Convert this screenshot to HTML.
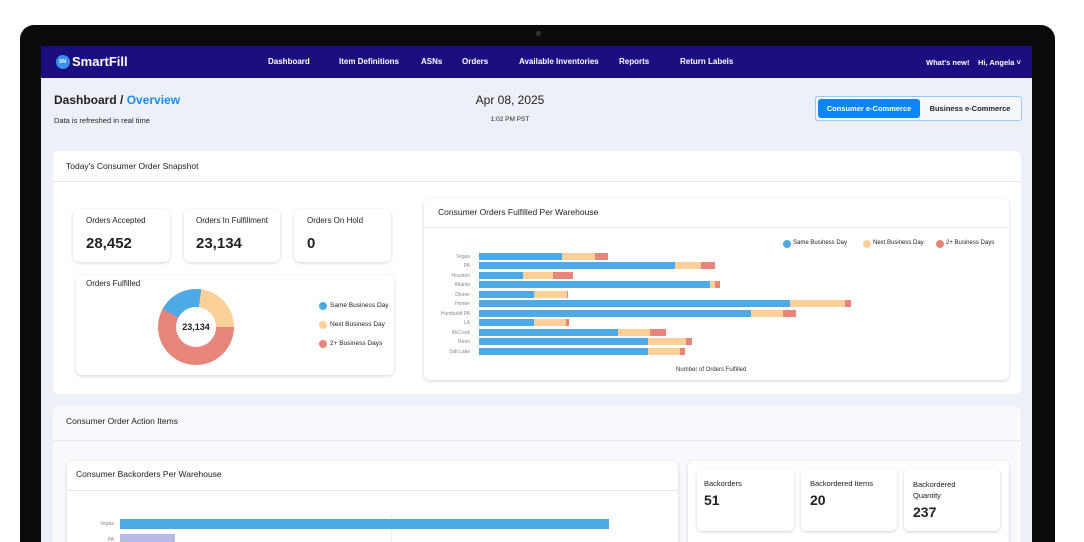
<!DOCTYPE html>
<html><head><meta charset="utf-8"><style>
*{margin:0;padding:0;box-sizing:border-box}
html,body{width:1084px;height:542px;overflow:hidden}
body{background:#fff;font-family:"Liberation Sans",sans-serif;position:relative;color:#222}
.a{position:absolute}
.frame{left:20px;top:25px;width:1035px;height:517px;background:#0b0b0d;border-radius:14px 14px 0 0}
.screen{left:41px;top:46px;width:991px;height:496px;background:#edf0f7;overflow:hidden}
.nav{left:0;top:0;width:991px;height:32px;background:#1b0e80}
.nav span{position:absolute;top:11px;color:#fff;font-size:8px;font-weight:bold;white-space:nowrap}
.card{background:#fff;border-radius:6px}
.sh{box-shadow:0 1px 3px rgba(0,0,0,.18)}
.t{font-size:8.5px;white-space:nowrap}
.lbl{font-size:5px;color:#888;text-align:right;width:40px;white-space:nowrap}
.bar{height:7px}
.b{background:#4ea9e7}.o{background:#fdd09a}.r{background:#e8857a}
.dot{width:8px;height:8px;border-radius:50%}
</style></head><body>
<div class="a frame"></div>
<div class="a" style="left:536px;top:31px;width:5px;height:5px;border-radius:50%;background:#333"></div>
<div class="a screen">
 <div class="a nav">
  <div class="a" style="left:15px;top:9px;width:14px;height:14px;border-radius:50%;background:#3b8ef0"></div>
  <span style="left:18px;top:13px;font-size:5px">SN</span>
  <span style="left:31px;top:8px;font-size:13px">SmartFill</span>
  <span style="left:227px">Dashboard</span>
  <span style="left:298px">Item Definitions</span>
  <span style="left:380px">ASNs</span>
  <span style="left:421px">Orders</span>
  <span style="left:478px">Available Inventories</span>
  <span style="left:578px">Reports</span>
  <span style="left:639px">Return Labels</span>
  <span style="left:885px;top:12px;font-size:7.5px">What's new!</span>
  <span style="left:937px;top:12px;font-size:7.5px">Hi, Angela ˅</span>
 </div>
 <div class="a" style="left:13px;top:47px;font-size:12px;font-weight:bold">Dashboard / <span style="color:#1a8cf0">Overview</span></div>
 <div class="a t" style="left:13px;top:70px;font-size:7.5px">Data is refreshed in real time</div>
 <div class="a" style="left:430px;top:47px;width:78px;text-align:center;font-size:12px">Apr 08, 2025</div>
 <div class="a" style="left:430px;top:70px;width:78px;text-align:center;font-size:6.5px">1:02 PM PST</div>
 <div class="a" style="left:774px;top:50px;width:207px;height:25px;border:1px solid #9cc8f5;border-radius:3px;background:#f4f7fc"></div>
 <div class="a" style="left:777px;top:53px;width:102px;height:19px;background:#0a84ff;border-radius:3px;color:#fff;font-size:7.5px;font-weight:bold;text-align:center;line-height:19px">Consumer e-Commerce</div>
 <div class="a" style="left:879px;top:53px;width:100px;height:19px;font-size:7.5px;font-weight:bold;text-align:center;line-height:19px">Business e-Commerce</div>

 <div class="a card" style="left:12px;top:105px;width:968px;height:243px"></div>
 <div class="a t" style="left:25px;top:115px">Today's Consumer Order Snapshot</div>
 <div class="a" style="left:12px;top:135px;width:968px;height:1px;background:#e6e8ee"></div>

 <div class="a card sh" style="left:32px;top:163px;width:97px;height:53px"></div>
 <div class="a card sh" style="left:143px;top:163px;width:96px;height:53px"></div>
 <div class="a card sh" style="left:253px;top:163px;width:97px;height:53px"></div>
 <div class="a t" style="left:45px;top:170px;font-size:8px">Orders Accepted</div>
 <div class="a t" style="left:155px;top:170px;font-size:8px">Orders In Fulfillment</div>
 <div class="a t" style="left:266px;top:170px;font-size:8px">Orders On Hold</div>
 <div class="a" style="left:45px;top:189px;font-size:15px;font-weight:bold">28,452</div>
 <div class="a" style="left:155px;top:189px;font-size:15px;font-weight:bold">23,134</div>
 <div class="a" style="left:266px;top:189px;font-size:15px;font-weight:bold">0</div>

 <div class="a card sh" style="left:35px;top:229px;width:318px;height:100px"></div>
 <div class="a t" style="left:45px;top:233px;font-size:8px">Orders Fulfilled</div>
 <div class="a" style="left:117px;top:243px;width:76px;height:76px;border-radius:50%;background:conic-gradient(from -62deg,#4ea9e7 0 70deg,#fdd09a 70deg 152deg,#e8857a 152deg 360deg)"></div>
 <div class="a" style="left:135px;top:261px;width:40px;height:40px;border-radius:50%;background:#fff;text-align:center;line-height:40px;font-size:9px;font-weight:bold">23,134</div>
 <div class="a dot b" style="left:278px;top:256px"></div><div class="a t" style="left:289px;top:256px;font-size:6.5px">Same Business Day</div>
 <div class="a dot o" style="left:278px;top:275px"></div><div class="a t" style="left:289px;top:275px;font-size:6.5px">Next Business Day</div>
 <div class="a dot r" style="left:278px;top:294px"></div><div class="a t" style="left:289px;top:294px;font-size:6.5px">2+ Business Days</div>

 <div class="a card sh" style="left:383px;top:152px;width:585px;height:182px"></div>
 <div class="a t" style="left:397px;top:161px">Consumer Orders Fulfilled Per Warehouse</div>
 <div class="a" style="left:383px;top:181px;width:585px;height:1px;background:#eceef2"></div>
 <div class="a dot b" style="left:742px;top:194px"></div><div class="a t" style="left:752px;top:194px;font-size:6px">Same Business Day</div>
 <div class="a dot o" style="left:822px;top:194px"></div><div class="a t" style="left:832px;top:194px;font-size:6px">Next Business Day</div>
 <div class="a dot r" style="left:895px;top:194px"></div><div class="a t" style="left:905px;top:194px;font-size:6px">2+ Business Days</div>
 <div class="a t" style="left:635px;top:321px;font-size:6px;color:#333">Number of Orders Fulfilled</div>
 <div id="bars"></div>

 <div class="a card" style="left:12px;top:360px;width:968px;height:200px;background:#f8f9fc"></div>
 <div class="a t" style="left:25px;top:370px">Consumer Order Action Items</div>
 <div class="a" style="left:12px;top:394px;width:968px;height:1px;background:#e2e5ec"></div>
 <div class="a card sh" style="left:26px;top:415px;width:611px;height:100px"></div>
 <div class="a t" style="left:35px;top:423px">Consumer Backorders Per Warehouse</div>
 <div class="a" style="left:26px;top:444px;width:611px;height:1px;background:#e6e8ee"></div>
 <div class="a" style="left:350px;top:468px;width:1px;height:40px;background:#eceef4"></div>
 <div class="a lbl" style="left:33px;top:475px">Vegas</div>
 <div class="a b" style="left:79px;top:473px;width:489px;height:10px"></div>
 <div class="a lbl" style="left:33px;top:491px">PA</div>
 <div class="a" style="left:79px;top:488px;width:55px;height:10px;background:#b9b9e6"></div>
 <div class="a card sh" style="left:647px;top:415px;width:321px;height:100px"></div>
 <div class="a card sh" style="left:656px;top:422px;width:97px;height:63px"></div>
 <div class="a card sh" style="left:760px;top:422px;width:96px;height:63px"></div>
 <div class="a card sh" style="left:863px;top:422px;width:96px;height:63px"></div>
 <div class="a t" style="left:663px;top:433px;font-size:7.5px">Backorders</div>
 <div class="a t" style="left:769px;top:433px;font-size:7.5px">Backordered Items</div>
 <div class="a" style="left:872px;top:433px;font-size:7.5px;line-height:11px">Backordered<br>Quantity</div>
 <div class="a" style="left:663px;top:446px;font-size:14px;font-weight:bold">51</div>
 <div class="a" style="left:769px;top:446px;font-size:14px;font-weight:bold">20</div>
 <div class="a" style="left:872px;top:458px;font-size:14px;font-weight:bold">237</div>
</div>
<script>
var d=[["Vegas",562,595,608],["PA",675,701,715],["Houston",523,553,573],["Atlanta",710,715,720],["Dinner",534,567,568],["Homer",790,845,851],["Humboldt PA",751,783,796],["LA",534,566,569],["McCook",618,650,666],["Reno",648,686,692],["Salt Lake",648,680,685]];
var h="",s=479;
d.forEach(function(r,i){var y=252.5+i*9.5-46;
h+='<div class="a lbl" style="left:'+(430-41)+'px;top:'+(y+1)+'px">'+r[0]+'</div>';
h+='<div class="a bar b" style="left:'+(s-41)+'px;top:'+y+'px;width:'+(r[1]-s)+'px"></div>';
h+='<div class="a bar o" style="left:'+(r[1]-41)+'px;top:'+y+'px;width:'+(r[2]-r[1])+'px"></div>';
h+='<div class="a bar r" style="left:'+(r[2]-41)+'px;top:'+y+'px;width:'+(r[3]-r[2])+'px"></div>';});
document.getElementById("bars").innerHTML=h;
</script>
</body></html>
